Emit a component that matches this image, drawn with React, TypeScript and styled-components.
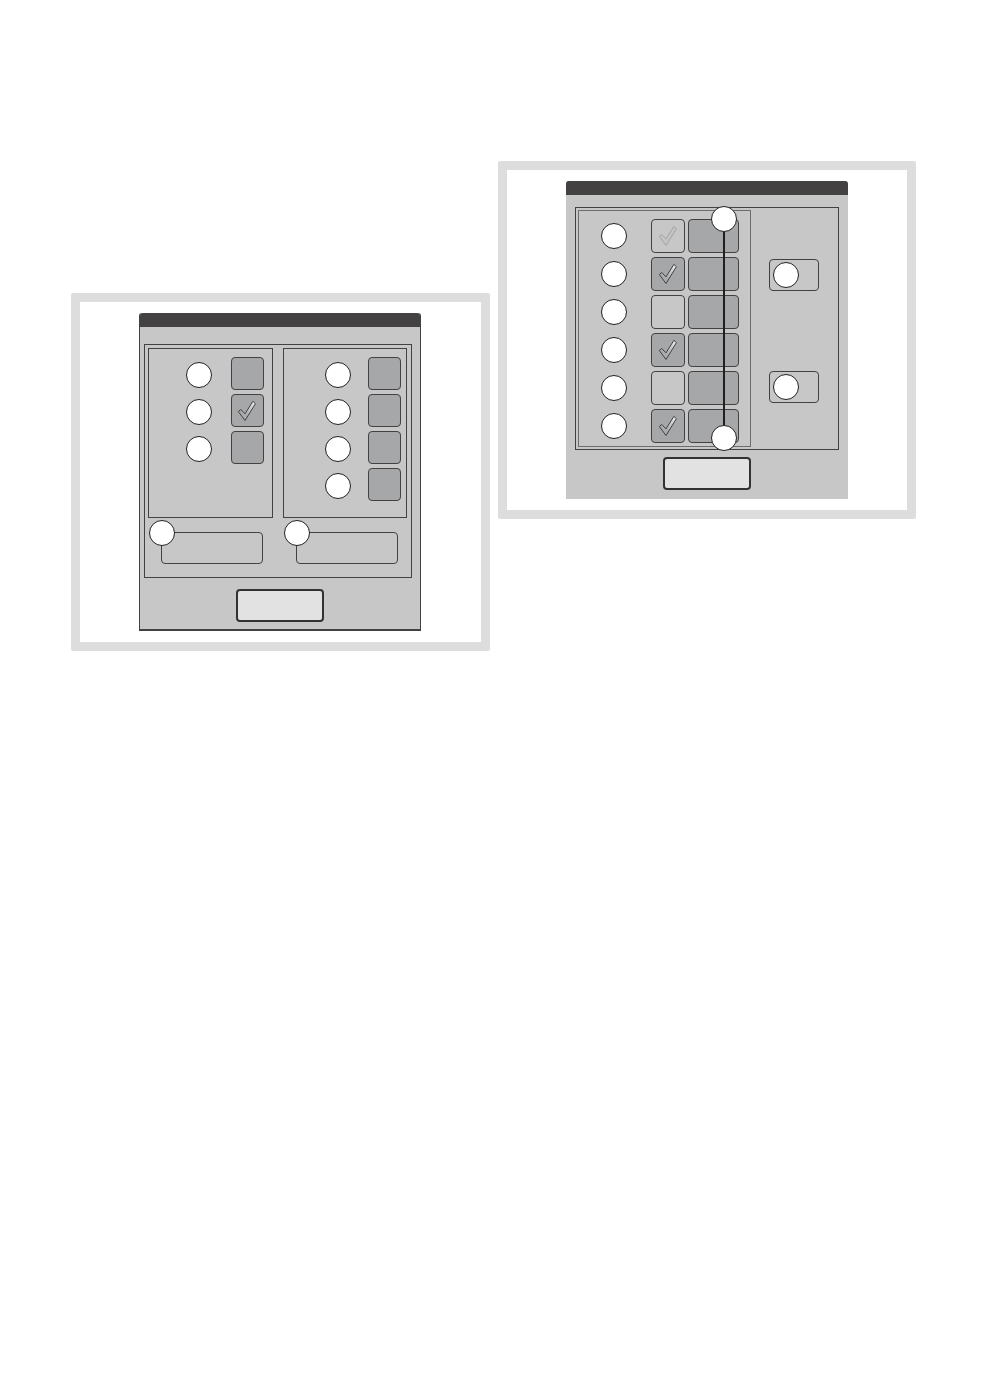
import React, { useState } from "react";
import styled, { createGlobalStyle, css } from "styled-components";

const GlobalStyle = createGlobalStyle`
  *, *::before, *::after { box-sizing: border-box; }
  body {
    margin: 0;
    background: #ffffff;
    font-family: "Liberation Sans", sans-serif;
  }
`;

const ink = "#434142";
const surface = "#c7c7c7";

const Page = styled.main`
  display: grid;
  grid-template-columns: repeat(2, minmax(0, 1fr));
  align-items: start;
  gap: 8px;
  padding: 161px 70px 161px 71px;
`;

const Figure = styled.section<{ $lowered?: boolean }>`
  display: flex;
  justify-content: center;
  margin-top: ${(p) => (p.$lowered ? 132 : 0)}px;
  padding: 11px 0;
  border: 9px solid #dddddd;
  border-radius: 2px;
  background: #ffffff;
`;

const Dialog = styled.form<{ $outlined?: boolean }>`
  display: flex;
  flex-direction: column;
  width: 282px;
  height: 318px;
  border-radius: 3px 3px 0 0;
  background: ${surface};
  ${(p) =>
    p.$outlined &&
    css`
      border: solid ${ink};
      border-width: 0 1px 2px;
    `}
`;

const TitleBar = styled.header`
  flex: none;
  height: 14px;
  border-radius: 3px 3px 0 0;
  background: ${ink};
`;

const OptionsBox = styled.div`
  display: grid;
  grid-template-columns: repeat(2, minmax(0, 1fr));
  gap: 14px 10px;
  margin: 17px 8px 11px 4px;
  padding: 3px 4px 13px 3px;
  border: 1px solid ${ink};
`;

const OptionGroup = styled.fieldset<{ $inset: number; $gap: number }>`
  display: flex;
  justify-content: flex-end;
  gap: ${(p) => p.$gap}px;
  min-width: 0;
  height: 170px;
  margin: 0;
  padding: 8px ${(p) => p.$inset}px 0 0;
  border: 1px solid ${ink};
`;

const LabelStack = styled.div`
  display: flex;
  flex-direction: column;
  gap: 11px;
  padding-top: 5px;
`;

const BoxStack = styled.div`
  display: flex;
  flex-direction: column;
  gap: 4px;
`;

const circle = css`
  display: block;
  flex: none;
  width: 26px;
  height: 26px;
  border: 1px solid #231f20;
  border-radius: 50%;
  background: #ffffff;
`;

const CircleLabel = styled.label`
  ${circle}
`;

const Marker = styled.span`
  ${circle}
`;

const CornerMarker = styled(Marker)`
  position: absolute;
  top: -13px;
  left: -13px;
`;

const TickCell = styled.span<{ $size: number }>`
  display: grid;
  place-items: center;
  flex: none;
  width: ${(p) => p.$size}px;
  height: ${(p) => p.$size}px;

  & > * {
    grid-area: 1 / 1;
  }
`;

const TickInput = styled.input<{ $light?: boolean }>`
  appearance: none;
  width: 100%;
  height: 100%;
  margin: 0;
  border: 1px solid ${ink};
  border-radius: 4px;
  background: ${(p) => (p.$light ? surface : "#a5a7a8")};
`;

const TickMark = styled.svg<{ $faint?: boolean }>`
  pointer-events: none;
  stroke: ${(p) => (p.$faint ? "#a3a3a3" : "#434142")};
  stroke-width: 1;
`;

const OutlineButton = styled.button<{ $width: number }>`
  position: relative;
  display: flex;
  align-items: center;
  width: ${(p) => p.$width}px;
  height: 32px;
  padding: 0 0 0 3px;
  border: 1px solid ${ink};
  border-radius: 4px;
  background: ${surface};
`;

const ActionSlot = styled.div`
  padding-left: 13px;
`;

const ConfirmButton = styled.button`
  flex: none;
  align-self: center;
  width: 88px;
  height: 33px;
  padding: 0;
  border: 2px solid #333132;
  border-radius: 4px;
  background: #e2e2e2;
`;

const ChannelsBox = styled.div`
  display: flex;
  margin: 12px 9px 7px;
  padding: 2px;
  border: 1px solid ${ink};
`;

const ChannelList = styled.fieldset`
  position: relative;
  display: flex;
  flex-direction: column;
  gap: 4px;
  width: 173px;
  min-width: 0;
  margin: 0;
  padding: 8px 11px 3px 0;
  border: 1px solid #6d6d6d;
`;

const ChannelRow = styled.div`
  display: flex;
  align-items: center;
  justify-content: flex-end;
  gap: 3px;
`;

const ChannelLabel = styled(CircleLabel)`
  margin-right: 21px;
`;

const ValueButton = styled.button`
  width: 51px;
  height: 34px;
  padding: 0;
  border: 1px solid ${ink};
  border-radius: 4px;
  background: #a5a7a8;
`;

const RangeBracket = styled.div`
  position: absolute;
  top: -5px;
  right: 13px;
  bottom: -5px;
  display: flex;
  flex-direction: column;
  align-items: center;
  pointer-events: none;
`;

const RangeLine = styled.span`
  flex: 1;
  width: 2px;
  background: #231f20;
`;

const SideActions = styled.div`
  display: flex;
  flex-direction: column;
  gap: 80px;
  padding: 49px 0 0 18px;
`;

type TickBoxProps = {
  id: string;
  size: number;
  initial?: boolean;
  disabled?: boolean;
  plainWhenOff?: boolean;
};

function TickBox({ id, size, initial = false, disabled, plainWhenOff }: TickBoxProps) {
  const [checked, setChecked] = useState(initial);
  const light = disabled || (plainWhenOff && !checked);
  return (
    <TickCell $size={size}>
      <TickInput
        id={id}
        type="checkbox"
        aria-label={id}
        checked={checked}
        disabled={disabled}
        $light={light}
        onChange={(e) => setChecked(e.target.checked)}
      />
      {checked && (
        <TickMark $faint={disabled} width="20" height="22" viewBox="0 0 20 22" aria-hidden="true">
          <defs>
            <linearGradient id={`${id}-shade`} x1="0" y1="1" x2="1" y2="0">
              <stop offset="0.35" stopColor="#a9abac" />
              <stop offset="1" stopColor="#eeeeee" />
            </linearGradient>
          </defs>
          <path
            d="M1.3 11.5 3.8 9.5 8 13.9 15.9 1.3 18.4 3.7 8 20.5Z"
            fill={disabled ? "#c4c4c4" : `url(#${id}-shade)`}
          />
        </TickMark>
      )}
    </TickCell>
  );
}

type Option = { id: string; on?: boolean };

const modes: Option[] = [{ id: "mode-1" }, { id: "mode-2", on: true }, { id: "mode-3" }];
const levels: Option[] = [{ id: "level-1" }, { id: "level-2" }, { id: "level-3" }, { id: "level-4" }];
const channels = [
  { id: "channel-1", on: true, locked: true },
  { id: "channel-2", on: true },
  { id: "channel-3" },
  { id: "channel-4", on: true },
  { id: "channel-5" },
  { id: "channel-6", on: true },
];

function Options({ items, inset, gap }: { items: Option[]; inset: number; gap: number }) {
  return (
    <OptionGroup $inset={inset} $gap={gap}>
      <LabelStack>
        {items.map((o) => (
          <CircleLabel key={o.id} htmlFor={o.id} />
        ))}
      </LabelStack>
      <BoxStack>
        {items.map((o) => (
          <TickBox key={o.id} id={o.id} size={33} initial={o.on} />
        ))}
      </BoxStack>
    </OptionGroup>
  );
}

export default function App() {
  return (
    <>
      <GlobalStyle />
      <Page>
        <Figure $lowered>
          <Dialog $outlined>
            <TitleBar />
            <OptionsBox>
              <Options items={modes} inset={8} gap={19} />
              <Options items={levels} inset={5} gap={17} />
              {["Mode action", "Level action"].map((name) => (
                <ActionSlot key={name}>
                  <OutlineButton type="button" aria-label={name} $width={102}>
                    <CornerMarker />
                  </OutlineButton>
                </ActionSlot>
              ))}
            </OptionsBox>
            <ConfirmButton type="button" aria-label="Confirm options" />
          </Dialog>
        </Figure>

        <Figure>
          <Dialog>
            <TitleBar />
            <ChannelsBox>
              <ChannelList>
                {channels.map((c) => (
                  <ChannelRow key={c.id}>
                    <ChannelLabel htmlFor={c.id} />
                    <TickBox id={c.id} size={34} initial={c.on} disabled={c.locked} plainWhenOff />
                    <ValueButton type="button" aria-label={`${c.id} value`} />
                  </ChannelRow>
                ))}
                <RangeBracket>
                  <Marker />
                  <RangeLine />
                  <Marker />
                </RangeBracket>
              </ChannelList>
              <SideActions>
                {["Upper action", "Lower action"].map((name) => (
                  <OutlineButton key={name} type="button" aria-label={name} $width={50}>
                    <Marker />
                  </OutlineButton>
                ))}
              </SideActions>
            </ChannelsBox>
            <ConfirmButton type="button" aria-label="Confirm channels" />
          </Dialog>
        </Figure>
      </Page>
    </>
  );
}
